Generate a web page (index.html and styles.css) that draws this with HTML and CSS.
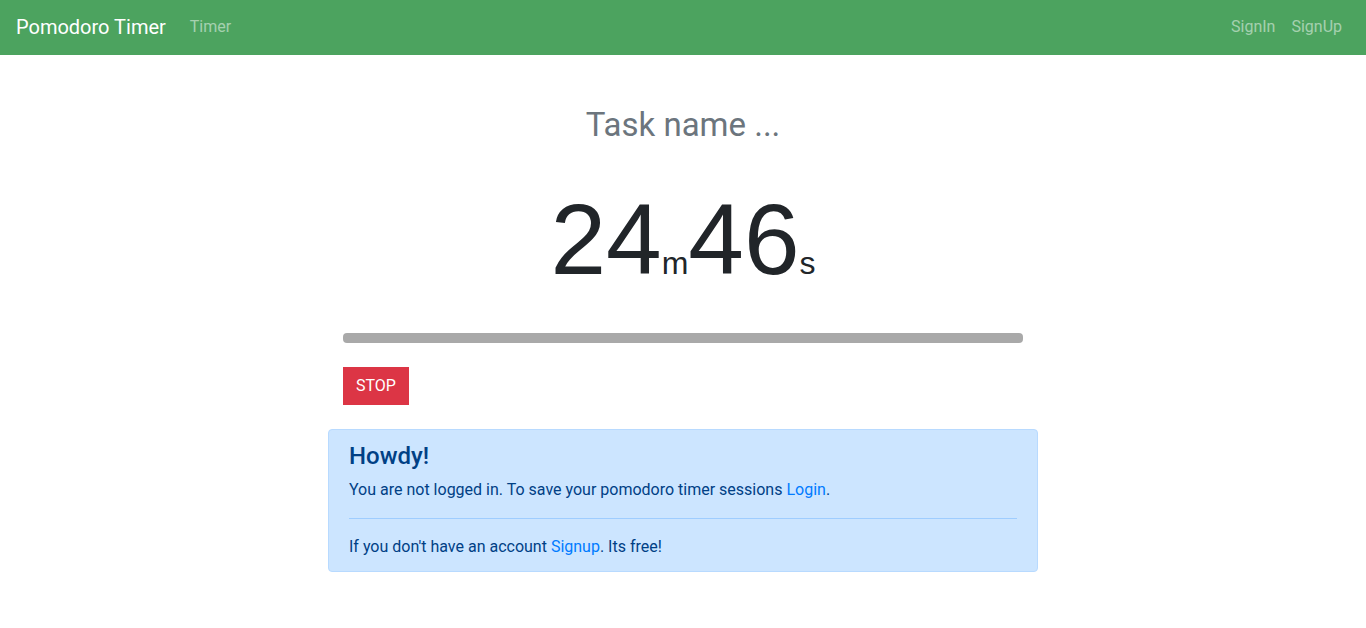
FILE: index.html
```html
<!DOCTYPE html>
<html lang="en">
<head>
<meta charset="utf-8">
<title>Pomodoro Timer</title>
<link rel="stylesheet" href="styles.css">
</head>
<body>
<nav class="navbar">
  <a class="brand" href="#">Pomodoro Timer</a>
  <ul class="nav-links">
    <li><a class="nav-link" href="#">Timer</a></li>
  </ul>
  <ul class="nav-links nav-right">
    <li><a class="nav-link" href="#">SignIn</a></li>
    <li><a class="nav-link" href="#">SignUp</a></li>
  </ul>
</nav>
<main class="container">
  <h2 class="task-name">Task name ...</h2>
  <div class="timer"><span class="num">24</span><span class="unit">m</span><span class="num">46</span><span class="unit">s</span></div>
  <div class="inner">
    <div class="progress"></div>
    <button class="btn-stop" type="button">STOP</button>
  </div>
  <div class="alert">
    <h4 class="alert-heading">Howdy!</h4>
    <p>You are not logged in. To save your pomodoro timer sessions <a href="#">Login</a>.</p>
    <hr>
    <p class="mb-0">If you don't have an account <a href="#">Signup</a>. Its free!</p>
  </div>
</main>
</body>
</html>
```
FILE: styles.css
```css
* { box-sizing: border-box; }
html, body { margin: 0; padding: 0; }
body {
  font-family: Roboto, "Liberation Sans", Arial, sans-serif;
  font-size: 16px;
  line-height: 1.5;
  color: #212529;
  background: #fff;
}
a { text-decoration: none; }

.navbar {
  display: flex;
  align-items: center;
  background: #4ca35f;
  padding: 7px 16px 9px;
  height: 55px;
}
.brand {
  color: #fff;
  font-size: 20px;
  line-height: 30px;
  padding: 5px 0;
  margin-right: 16px;
}
.nav-links {
  display: flex;
  list-style: none;
  margin: 0;
  padding: 0;
}
.nav-right { margin-left: auto; }
.nav-link {
  display: block;
  padding: 8px;
  color: rgba(255, 255, 255, 0.5);
}

.container {
  width: 710px;
  margin: 0 auto;
}
.task-name {
  margin: 50px 0 0;
  font-size: 33px;
  font-weight: 400;
  line-height: 1.2;
  color: #6c757d;
  text-align: center;
}
.timer {
  margin-top: 34px;
  text-align: center;
  line-height: 120px;
  height: 120px;
  font-family: "Liberation Sans", Arial, sans-serif;
  color: #212529;
}
.timer .num { font-size: 100px; }
.timer .unit { font-size: 32px; }
.inner { padding: 0 15px; }
.progress {
  margin-top: 34.4px;
  height: 10px;
  border-radius: 4px;
  background: #a9a9a9;
}
.btn-stop {
  display: block;
  margin-top: 24px;
  padding: 6px 12px;
  font-family: Roboto, sans-serif;
  font-size: 16px;
  line-height: 24px;
  color: #fff;
  background: #dc3545;
  border: 1px solid #dc3545;
  border-radius: 0;
}
.alert {
  margin-top: 24px;
  padding: 12px 20px;
  background: #cce5ff;
  border: 1px solid #b8daff;
  border-radius: 4px;
  color: #004085;
}
.alert-heading {
  margin: 0 0 7.2px;
  font-size: 24px;
  font-weight: 500;
  line-height: 1.2;
}
.alert p { margin: 0 0 16px; }
.alert p.mb-0 { margin-bottom: 0; }
.alert hr {
  margin: 16px 0;
  border: 0;
  border-top: 1px solid #9fcdff;
}
.alert a { color: #007bff; }
```
